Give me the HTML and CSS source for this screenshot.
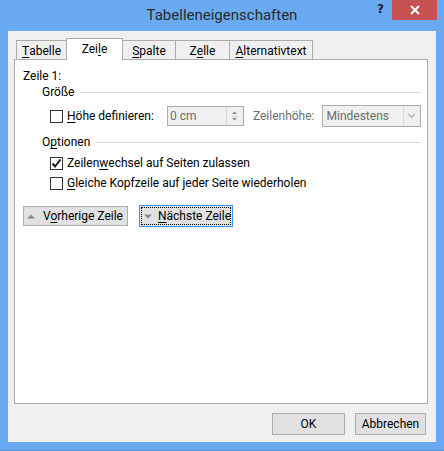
FILE: index.html
```html
<!DOCTYPE html>
<html lang="de">
<head>
<meta charset="utf-8">
<title>Tabelleneigenschaften</title>
<link rel="stylesheet" href="styles.css">
</head>
<body>
<div class="window">
  <div class="titlebar">
    <div class="title">Tabelleneigenschaften</div>
    <div class="help">?</div>
    <div class="close">
      <svg width="12" height="10" viewBox="0 0 12 10"><path d="M2 1 L10 9 M10 1 L2 9" stroke="#fff" stroke-width="2"/></svg>
    </div>
  </div>
  <div class="client">
    <div class="tabs">
      <div class="tab t1"><u>T</u>abelle</div>
      <div class="tab active">Zei<u>l</u>e</div>
      <div class="tab t3"><u>S</u>palte</div>
      <div class="tab t4">Z<u>e</u>lle</div>
      <div class="tab t5"><u>A</u>lternativtext</div>
    </div>
    <div class="panel">
      <div class="row r-head">Zeile 1:</div>
      <div class="row r-group"><span class="gtitle">Größe</span><span class="gline"></span></div>
      <div class="row r-size">
        <span class="cb"></span>
        <span class="lbl"><u>H</u>öhe definieren:</span>
        <span class="spin">
          <span class="spin-text">0 cm</span>
          <span class="spin-btns">
            <svg class="ico" width="9" height="18" viewBox="0 0 9 18"><path d="M2 7 L4.5 4.5 L7 7 Z" fill="#8c8c8c"/><path d="M1.5 9.5 H7.5" stroke="#d4d4d4" stroke-width="1"/><path d="M2 11 L4.5 13.5 L7 11 Z" fill="#8c8c8c"/></svg>
          </span>
        </span>
        <span class="lbl dis">Zeilenhöhe:</span>
        <span class="combo">
          <span class="combo-text">Mindestens</span>
          <span class="combo-btn">
            <svg class="ico" width="9" height="6" viewBox="0 0 9 6"><path d="M1 1 L4.5 4.5 L8 1" fill="none" stroke="#b5b5b5" stroke-width="1.4"/></svg>
          </span>
        </span>
      </div>
      <div class="row r-group2"><span class="gtitle">O<u>p</u>tionen</span><span class="gline"></span></div>
      <div class="row r-cb1">
        <span class="cb">
          <svg class="ico" width="11" height="11" viewBox="0 0 11 11"><path d="M1.5 5.5 L4 8.5 L9.5 1.5" fill="none" stroke="#1a1a1a" stroke-width="2"/></svg>
        </span>
        <span class="lbl">Zeilen<u>w</u>echsel auf Seiten zulassen</span>
      </div>
      <div class="row r-cb2">
        <span class="cb"></span>
        <span class="lbl"><u>G</u>leiche Kopfzeile auf jeder Seite wiederholen</span>
      </div>
      <div class="row r-btns">
        <span class="btn b-prev">
          <svg class="ico" width="8" height="5" viewBox="0 0 8 5"><path d="M0 4.5 L4 0.5 L8 4.5 Z" fill="#8a8a8a"/></svg>
          <span>V<u>o</u>rherige Zeile</span>
        </span>
        <span class="btn b-next">
          <span class="focus">
            <svg class="ico" width="8" height="5" viewBox="0 0 8 5"><path d="M0 0.5 L4 4.5 L8 0.5 Z" fill="#8a8a8a"/></svg>
            <span><u>N</u>ächste Zeile</span>
          </span>
        </span>
      </div>
    </div>
    <div class="footer">
      <span class="btn b-ok">OK</span>
      <span class="btn b-cancel">Abbrechen</span>
    </div>
  </div>
</div>
</body>
</html>
```

FILE: styles.css
```css
* { box-sizing: border-box; }
html, body { margin: 0; padding: 0; }
body {
  width: 444px;
  height: 451px;
  overflow: hidden;
  font-family: Roboto, "Noto Sans", sans-serif;
  font-size: 12px;
  color: #000;
}
u { text-decoration: underline; text-underline-offset: 2px; text-decoration-thickness: 1px; }
.ico { flex: none; display: block; }

.window {
  width: 444px;
  height: 451px;
  background: #69aaf3;
  border-bottom: 1px solid #5a93d6;
  display: flex;
  flex-direction: column;
}

.titlebar {
  height: 31px;
  display: flex;
  position: relative;
}
.title {
  flex: 1;
  text-align: center;
  font-size: 15px;
  line-height: 31px;
  color: #2b2b2b;
}
.help {
  position: absolute;
  left: 377px;
  top: 2px;
  font-family: "DejaVu Sans", sans-serif;
  font-weight: bold;
  font-size: 12px;
  color: #1e1e1e;
}
.close {
  position: absolute;
  left: 392px;
  top: 0;
  width: 45px;
  height: 20px;
  background: #c75050;
  display: flex;
  align-items: center;
  justify-content: center;
}

.client {
  margin: 0 8px 0 8px;
  height: 411px;
  background: #f0f0f0;
  padding: 7px 8px 0 6px;
  display: flex;
  flex-direction: column;
}

.tabs {
  display: flex;
  height: 21px;
  padding-left: 2px;
  align-items: flex-end;
}
.tab {
  height: 19px;
  border: 1px solid #acacac;
  border-bottom: none;
  border-right: none;
  background: #f0f0f0;
  display: flex;
  align-items: center;
  justify-content: center;
  padding-top: 1px;
}
.t1 { width: 50px; }
.t3 { width: 53px; }
.t4 { width: 54px; }
.t5 { width: 84px; border-right: 1px solid #acacac; }
.active {
  width: 57px;
  background: #fff;
  padding-bottom: 2px;
  position: relative;
  z-index: 1;
  margin-bottom: -1px;
  border-right: 1px solid #acacac;
  margin-right: -1px;
  height: 22px;
}

.panel {
  width: 414px;
  height: 345px;
  background: #fff;
  border: 1px solid #acacac;
  padding: 0 6px 0 8px;
  display: flex;
  flex-direction: column;
}

.row {
  display: flex;
  align-items: center;
  height: 16px;
  white-space: nowrap;
}
.r-head { margin-top: 8px; }
.r-group { padding-left: 19px; }
.gline {
  flex: 1;
  height: 1px;
  background: #dcdcdc;
  margin-left: 6px;
}
.r-size { margin-top: 5px; height: 22px; padding-left: 27px; }
.r-group2 { margin-top: 7px; padding-left: 19px; }
.r-cb1 { margin-top: 5px; padding-left: 27px; }
.r-cb2 { margin-top: 4px; padding-left: 27px; }
.r-btns { margin-top: 14px; height: 22px; }

.cb {
  width: 13px;
  height: 13px;
  border: 1px solid #333;
  background: #fff;
  display: inline-flex;
  align-items: center;
  justify-content: center;
  margin-right: 4px;
  flex: none;
}
.lbl { line-height: 16px; }
.dis { color: #6d6d6d; margin-left: 9px; }

.spin {
  margin-left: 13px;
  width: 77px;
  height: 20px;
  border: 1px solid #acacac;
  background: #f0f0f0;
  display: flex;
  flex: none;
}
.spin-text {
  flex: 1;
  padding-left: 2px;
  color: #6d6d6d;
  line-height: 18px;
}
.spin-btns {
  width: 17px;
  border-left: 1px solid #d9d9d9;
  display: flex;
  align-items: center;
  justify-content: center;
}

.combo {
  margin-left: 7px;
  width: 99px;
  height: 22px;
  border: 1px solid #acacac;
  background: #f0f0f0;
  display: flex;
  flex: none;
}
.combo-text {
  flex: 1;
  padding-left: 4px;
  color: #6d6d6d;
  line-height: 20px;
}
.combo-btn {
  width: 17px;
  border-left: 1px solid #d9d9d9;
  display: flex;
  align-items: center;
  justify-content: center;
}

.btn {
  display: inline-flex;
  align-items: center;
  justify-content: center;
  background: #e1e1e1;
  border: 1px solid #adadad;
  height: 20px;
  flex: none;
}
.b-prev { width: 105px; gap: 8px; justify-content: flex-start; padding-left: 3px; }
.b-next {
  width: 94px;
  height: 22px;
  margin-left: 11px;
  border-color: #3399ff;
  padding: 1px;
}
.focus {
  width: 100%;
  height: 100%;
  border: 1px dotted #000;
  display: flex;
  align-items: center;
  gap: 6px;
  padding-left: 2px;
}

.footer {
  display: flex;
  justify-content: flex-end;
  gap: 10px;
  margin-top: 9px;
  padding-right: 2px;
}
.b-ok { width: 73px; height: 22px; }
.b-cancel { width: 71px; height: 22px; }
```
